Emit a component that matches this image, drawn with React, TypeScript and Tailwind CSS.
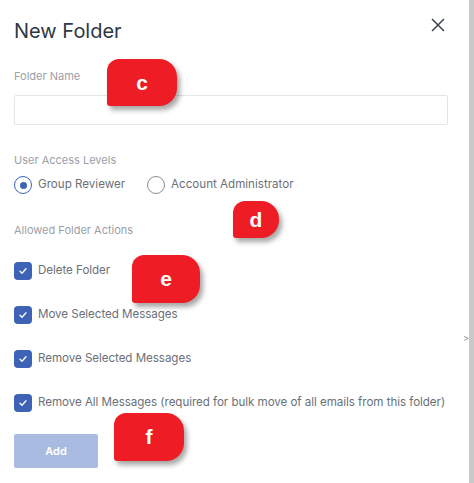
import React, { useState } from "react";

const font = { fontFamily: "Inter, 'Noto Sans', sans-serif" };

const Badge = ({ letter, className }: { letter: string; className: string }) => (
  <div
    className={`absolute flex items-center justify-center bg-[#ee1c25] text-white text-[21px] font-semibold rounded-tl-[12px] rounded-tr-[18px] rounded-br-[18px] rounded-bl-[3px] shadow-[3px_4px_5px_rgba(0,0,0,0.35)] ${className}`}
    style={{ fontFamily: "'Liberation Sans', Arial, sans-serif" }}
  >
    {letter}
  </div>
);

const CheckRow = ({ label }: { label: string }) => (
  <label className="flex items-center gap-[6px] h-[18px]">
    <span className="flex items-center justify-center w-[18px] h-[18px] rounded-[4px] bg-[#3e63b6]">
      <svg width="10" height="10" viewBox="0 0 10 10" fill="none">
        <path d="M2 5.2l2 2 4-4.4" stroke="#fff" strokeWidth="1.3" strokeLinecap="round" strokeLinejoin="round" />
      </svg>
    </span>
    <span className="text-[11.6px] text-[#6b7079] whitespace-nowrap tracking-[-0.05px]">{label}</span>
  </label>
);

export default function App() {
  const [level, setLevel] = useState("group");

  return (
    <div className="relative flex w-[474px] h-[483px] bg-white overflow-hidden" style={font}>
      <div className="flex-1 flex flex-col px-[14px]">
        <div className="flex items-start justify-between pt-[19px]">
          <h1 className="text-[20px] leading-[24px] text-[#2f3744] font-normal">New Folder</h1>
          <button className="mt-[-1px] mr-[10px] text-[#3b4350]">
            <svg width="14" height="14" viewBox="0 0 14 14">
              <path d="M1 1l12 12M13 1L1 13" stroke="currentColor" strokeWidth="1.5" />
            </svg>
          </button>
        </div>

        <div className="mt-[26px] text-[11px] leading-[14px] text-[#9ba0a8]">Folder Name</div>
        <input className="mt-[12px] w-[434px] h-[30px] border border-[#e3e5e8] rounded-[2px] outline-none" />

        <div className="mt-[28px] text-[11px] leading-[14px] text-[#9ba0a8]">User Access Levels</div>
        <div className="mt-[8px] flex items-center h-[20px]">
          <button className="flex items-center gap-[6px]" onClick={() => setLevel("group")}>
            <span className={`flex items-center justify-center w-[18px] h-[18px] rounded-full border-[1.5px] ${level === "group" ? "border-[#3e63b6]" : "border-[#8a8f96]"}`}>
              {level === "group" && <span className="w-[7px] h-[7px] rounded-full bg-[#3e63b6]" />}
            </span>
            <span className="text-[11.6px] text-[#6b7079]">Group Reviewer</span>
          </button>
          <button className="ml-[22px] flex items-center gap-[6px]" onClick={() => setLevel("admin")}>
            <span className={`flex items-center justify-center w-[18px] h-[18px] rounded-full border-[1.5px] ${level === "admin" ? "border-[#3e63b6]" : "border-[#8a8f96]"}`}>
              {level === "admin" && <span className="w-[7px] h-[7px] rounded-full bg-[#3e63b6]" />}
            </span>
            <span className="text-[11.6px] text-[#6b7079]">Account Administrator</span>
          </button>
        </div>

        <div className="mt-[28px] text-[11px] leading-[14px] text-[#9ba0a8]">Allowed Folder Actions</div>
        <div className="mt-[25px] flex flex-col gap-[26px]">
          <CheckRow label="Delete Folder" />
          <CheckRow label="Move Selected Messages" />
          <CheckRow label="Remove Selected Messages" />
          <CheckRow label="Remove All Messages (required for bulk move of all emails from this folder)" />
        </div>

        <button className="mt-[22px] w-[84px] h-[34px] rounded-[2px] bg-[#a9bbe0] text-white text-[11px] font-semibold">
          Add
        </button>
      </div>

      <div className="relative w-[5px] h-full bg-[#c9c9c9]">
        <span className="absolute left-[-6px] top-[331px] text-[9px] text-[#888]">&gt;</span>
      </div>

      <Badge letter="c" className="left-[107px] top-[59px] w-[70px] h-[47px]" />
      <Badge letter="d" className="left-[233px] top-[201px] w-[46px] h-[37px]" />
      <Badge letter="e" className="left-[132px] top-[255px] w-[68px] h-[48px]" />
      <Badge letter="f" className="left-[114px] top-[413px] w-[70px] h-[48px]" />
    </div>
  );
}
